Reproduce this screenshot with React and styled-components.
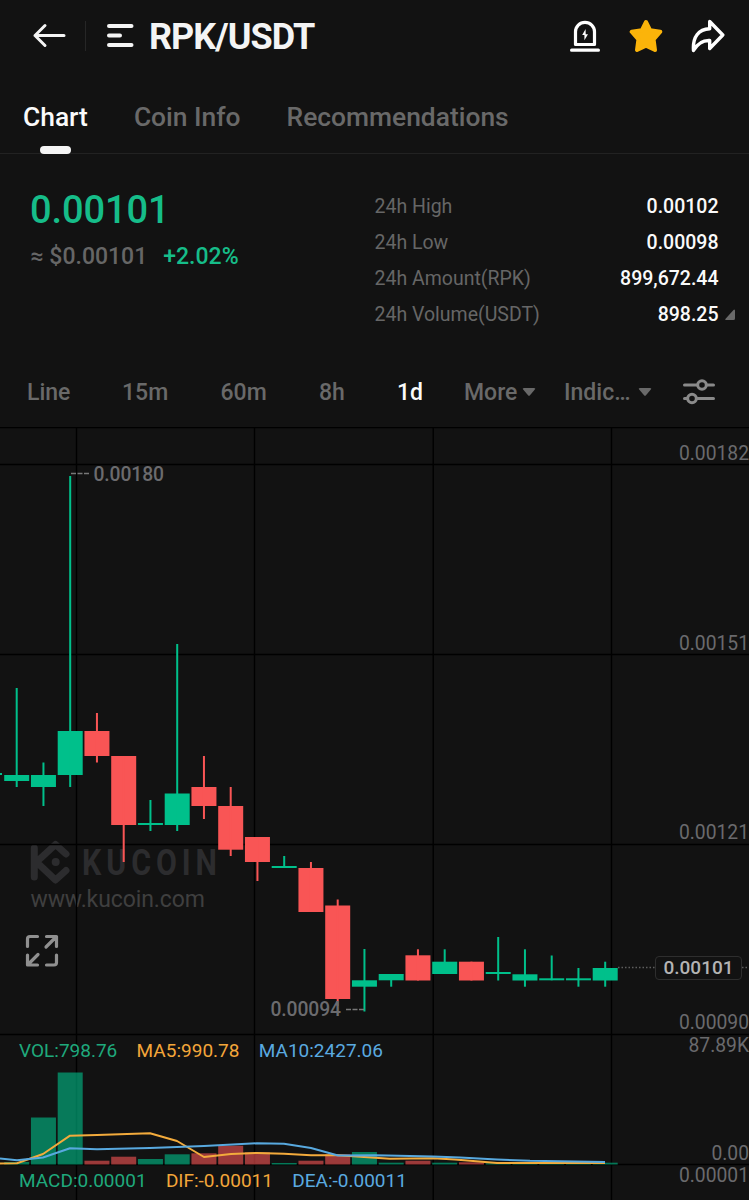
import React from 'react';
import styled, { createGlobalStyle } from 'styled-components';

const GlobalStyle = createGlobalStyle`
    * {
        box-sizing: border-box;
    }
    body {
        margin: 0;
        background: #121212;
        font-family: Roboto, 'Liberation Sans', sans-serif;
    }
`;

const GREEN = '#00c08b';
const RED = '#f95555';

const Page = styled.div`
    width: 749px;
    height: 1200px;
    overflow: hidden;
    display: flex;
    flex-direction: column;
    background: #121212;
    color: #f4f4f4;
    white-space: nowrap;
`;

const Header = styled.header`
    height: 72px;
    flex: none;
    display: flex;
    align-items: center;
    padding: 0 24px 0 32px;

    & svg {
        flex: none;
    }
`;

const Divider = styled.div`
    width: 1px;
    height: 30px;
    margin: 0 20px 0 19px;
    background: #262626;
`;

const Pair = styled.h1`
    flex: 1;
    margin: 2px 0 0 15px;
    font-size: 36px;
    line-height: 42px;
    font-weight: 700;
    letter-spacing: -0.95px;
`;

const HeaderActions = styled.div`
    display: flex;
    align-items: center;
    gap: 28px;

    & svg:first-child {
        margin-right: 1px;
    }
`;

const Tabs = styled.nav`
    height: 82px;
    flex: none;
    display: flex;
    gap: 46px;
    padding-left: 23px;
    border-bottom: 1px solid #222;
`;

const Tab = styled.div`
    display: flex;
    flex-direction: column;
    align-items: center;
    justify-content: space-between;
    padding-top: 30px;
    font-size: 26.4px;
    line-height: 30px;
    font-weight: 500;
    color: ${(p) => (p.$active ? '#fafafa' : '#696969')};

    &::after {
        content: '';
        width: 31px;
        height: 8px;
        margin-bottom: -1px;
        border-radius: 4px;
        background: ${(p) => (p.$active ? '#f4f4f4' : 'transparent')};
    }
`;

const Summary = styled.section`
    height: 203px;
    flex: none;
    display: flex;
    justify-content: space-between;
    padding: 34px 14.5px 0 30px;
`;

const Price = styled.div`
    font-size: 38px;
    line-height: 44px;
    font-weight: 500;
    letter-spacing: -0.1px;
    color: #16bd89;
`;

const Change = styled.div`
    display: flex;
    gap: 16px;
    margin: 11px 0 0 0.5px;
    font-size: 23px;
    line-height: 28px;
    font-weight: 500;
    color: #666;

    & strong {
        font-weight: 500;
        color: #16bd89;
    }
`;

const Stats = styled.div`
    width: 360px;
`;

const StatRow = styled.div`
    display: flex;
    align-items: center;
    height: 36px;
    font-size: 19.5px;
    color: #666;

    & strong {
        margin-left: auto;
        font-weight: 500;
        color: #fafafa;
    }
    & svg {
        margin-left: 6px;
    }
`;

const Intervals = styled.nav`
    height: 70px;
    flex: none;
    display: flex;
    align-items: center;
    padding-left: 27px;
    font-size: 23px;
    font-weight: 500;
    color: #696969;
`;

const Interval = styled.div`
    width: ${(p) => p.$width}px;
    flex: none;
    display: flex;
    align-items: center;
    gap: ${(p) => p.$gap || 5}px;
    color: ${(p) => (p.$active ? '#fafafa' : 'inherit')};
`;

const ChartPanel = styled.section`
    flex: 1;
    position: relative;
    overflow: hidden;

    & > svg {
        display: block;
        position: relative;
    }
`;

const Watermark = styled.div`
    position: absolute;
    left: 30px;
    top: 412px;
    color: #2c2c2e;
`;

const WatermarkLogo = styled.div`
    display: flex;
    align-items: center;
    gap: 12px;
    height: 46px;
    font-size: 37px;
    font-weight: 700;

    & span {
        letter-spacing: 6px;
        transform: scaleX(0.82);
        transform-origin: left;
    }
`;

const WatermarkUrl = styled.div`
    font-size: 23px;
    line-height: 28px;
    letter-spacing: -0.1px;
    margin: 1px 0 0 0.5px;
    color: #3f3f3f;
`;

const Legend = styled.div`
    position: absolute;
    left: 19px;
    top: ${(p) => p.$top}px;
    display: flex;
    gap: 19.3px;
    font-size: 19px;
    line-height: 24px;
`;

const LegendItem = styled.span`
    color: ${(p) => p.$color};
`;

const Expand = styled.div`
    position: absolute;
    left: 25px;
    top: 507px;
    line-height: 0;
`;

const PriceTag = styled.div`
    position: absolute;
    left: 655px;
    top: 529px;
    width: 87px;
    height: 24px;
    display: flex;
    align-items: center;
    justify-content: center;
    padding-bottom: 2px;
    border: 1px solid #2e2e2e;
    border-radius: 4px;
    background: #121212;
    font-size: 19px;
    font-weight: 500;
    color: #b4b4b4;
`;

const tabs = ['Chart', 'Coin Info', 'Recommendations'];

const stats = [
    ['24h High', '0.00102'],
    ['24h Low', '0.00098'],
    ['24h Amount(RPK)', '899,672.44'],
    ['24h Volume(USDT)', '898.25'],
];

// [up, high, top, bottom, low, volume top] in chart coordinates
const candles = [
    [1, 688, 775, 781, 787, 1162],
    [1, 762.5, 775, 787, 806, 1117.5],
    [1, 476, 731, 775, 787, 1072.5],
    [0, 713, 731, 756, 762.5, 1160.7],
    [0, 756, 756, 825, 862, 1156.7],
    [1, 800, 823, 825, 831, 1159],
    [1, 644, 793.5, 825, 831, 1154.3],
    [0, 756, 787, 806, 819, 1153.3],
    [0, 787, 806, 849.7, 856, 1145.7],
    [0, 837, 837, 862, 881, 1152.3],
    [1, 856, 866, 868, 868, 1163],
    [0, 862, 868, 912, 912, 1160.7],
    [0, 899.5, 905.5, 999, 1006, 1154.3],
    [1, 949, 980.3, 986.7, 1011.5, 1152],
    [1, 974, 974, 980.3, 986.7, 1162.7],
    [0, 949.3, 955.3, 980.5, 980.5, 1160.7],
    [1, 949.3, 961.7, 974, 974, 1162.7],
    [0, 961.7, 961.7, 980.5, 980.5, 1162.3],
    [1, 937, 972, 974, 980.5, 1163.3],
    [1, 949.3, 974.3, 980.5, 986.7, 1163.3],
    [1, 955.5, 978.3, 980.3, 980.3, 1163.3],
    [1, 968, 978.3, 980.3, 986.7, 1163.3],
    [1, 961.7, 968, 980.5, 986.7, 1162.7],
];

const ma5 =
    '0,1163.5 17,1163.3 43,1154 70,1135.7 97,1135 150,1133.2 177,1141 204,1157 231,1154 257,1153 284,1153.7 311,1155.2 338,1155.3 364,1157 390,1158.7 433,1158.2 455,1159.5 497,1163 605,1163';
const ma10 =
    '0,1158.5 17,1160.2 43,1157.5 70,1148.2 97,1149.3 150,1148 204,1146 257,1143.3 284,1143.7 311,1148 338,1155.5 375,1155.3 433,1156.5 460,1157.5 497,1159.5 530,1160.8 605,1162';

const axisLabels = [
    [453, '0.00182'],
    [643, '0.00151'],
    [832, '0.00121'],
    [1022, '0.00090'],
    [1045, '87.89K'],
    [1153, '0.00'],
    [1175, '0.00001'],
];

const Caret = () => (
    <svg width="14" height="10" viewBox="0 0 14 10" fill="#696969">
        <path d="M2 1h10q2 0 .8 1.6L8 8.200q-1 1-2 0L1.200 2.600Q0 1 2 1Z" />
    </svg>
);

function HeaderBar() {
    return (
        <Header>
            <svg width="34" height="30" fill="none" stroke="#f4f4f4" strokeWidth="3" strokeLinecap="round" strokeLinejoin="round">
                <path d="M13 4.500 3 14.500 13 24.500M3 14.500h29" />
            </svg>
            <Divider />
            <svg width="28" height="30" stroke="#f4f4f4" strokeWidth="4" strokeLinecap="round">
                <path d="M3 5h22.500M3 14.500h11M3 24h22.500" />
            </svg>
            <Pair>RPK/USDT</Pair>
            <HeaderActions>
                <svg width="30" height="34" viewBox="0 0 30 34" fill="none" stroke="#fff" strokeWidth="3.200" strokeLinejoin="round" strokeLinecap="round">
                    <path d="M5.500 25.500V12.800a9.500 9.500 0 0 1 19 0v12.700ZM1.600 31.200h26.800" />
                    <path d="M15.600 10 12.200 16h2.200v5.200l3.600-6h-2.300Z" fill="#fff" stroke="none" />
                </svg>
                <svg width="34" height="34" viewBox="0 0 34 34" fill="#fbb40a" stroke="#fbb40a" strokeWidth="4" strokeLinejoin="round">
                    <path d="M17 3 21.200 11.300 31.300 12.800 24.600 20.400 26 31 17 26.700 8 31 9.400 20.400 2.700 12.800 12.800 11.300Z" />
                </svg>
                <svg width="34" height="34" viewBox="0 0 34 34" fill="none" stroke="#fff" strokeWidth="3.400" strokeLinejoin="round" strokeLinecap="round">
                    <path d="M18.700 2.500 31.800 16 18.700 29.500V21.500C12 21.200 6.500 24.500 2.500 31.500 1.500 18 7.500 10.300 18.700 9.800Z" />
                </svg>
            </HeaderActions>
        </Header>
    );
}

function Chart() {
    return (
        <svg width="749" height="773" viewBox="0 427 749 773">
            <g stroke="#000" strokeWidth="1.400">
                {[427.5, 464.5, 654.5, 844.5, 1034.5, 1164.5].map((y) => (
                    <line key={y} x1="0" x2="749" y1={y} y2={y} />
                ))}
                {[76.5, 254.5, 433.2, 611.5].map((x) => (
                    <line key={x} x1={x} x2={x} y1="427" y2="1200" />
                ))}
            </g>
            <rect x="0" y="773" width="2" height="2" fill={GREEN} />
            {candles.map(([up, high, top, bottom, low, vol], i) => {
                const x = 16.7 + i * 26.75;
                return (
                    <g key={i} fill={up ? GREEN : RED}>
                        <rect x={x - 12.5} y={top} width="25" height={bottom - top} />
                        <rect x={x - 1} y={high} width="2" height={low - high} />
                        <rect x={x - 12.5} y={vol} width="25" height={1164.5 - vol} opacity="0.6" />
                    </g>
                );
            })}
            <g fill="none" strokeWidth="2" strokeLinejoin="round">
                <polyline points={ma5} stroke="#f3ab3c" />
                <polyline points={ma10} stroke="#58a9df" />
            </g>
            <g stroke="#777" strokeWidth="1.500">
                <path d="M71 473.500h18M346 1009.500h18" strokeDasharray="5 1.500" />
                <path d="M618 967.500h38M742 967.500h7" strokeDasharray="1.500 2" stroke="#5e5e5e" />
            </g>
            <g fontSize="19.300" fontWeight="500" fill="#6b6b6e">
                <text x="93.500" y="480.500" textLength="70.500">
                    0.00180
                </text>
                <text x="270.500" y="1015.500" textLength="70.500">
                    0.00094
                </text>
            </g>
            <g fontSize="19.300" fill="#6a6a6d" textAnchor="end">
                {axisLabels.map(([y, text]) => (
                    <text key={text} x="749" y={y + 6.500}>
                        {text}
                    </text>
                ))}
            </g>
        </svg>
    );
}

function App() {
    return (
        <Page>
            <GlobalStyle />
            <HeaderBar />
            <Tabs>
                {tabs.map((tab, i) => (
                    <Tab key={tab} $active={i === 0}>
                        {tab}
                    </Tab>
                ))}
            </Tabs>
            <Summary>
                <div>
                    <Price>0.00101</Price>
                    <Change>
                        <span>≈ $0.00101</span>
                        <strong>+2.02%</strong>
                    </Change>
                </div>
                <Stats>
                    {stats.map(([label, value]) => (
                        <StatRow key={label}>
                            {label}
                            <strong>{value}</strong>
                            <svg width="10" height="11" fill="#696969">
                                {value === '898.25' && <path d="M10 1.500v8q0 1.500-1.500 1.500H1q-1.500 0-.4-1.200L8.500 1Q9.500 0 10 1.500Z" />}
                            </svg>
                        </StatRow>
                    ))}
                </Stats>
            </Summary>
            <Intervals>
                <Interval $width={95}>Line</Interval>
                <Interval $width={98.5}>15m</Interval>
                <Interval $width={98.5}>60m</Interval>
                <Interval $width={78}>8h</Interval>
                <Interval $width={67} $active>
                    1d
                </Interval>
                <Interval $width={100}>
                    More
                    <Caret />
                </Interval>
                <Interval $width={119} $gap={8}>
                    Indic…
                    <Caret />
                </Interval>
                <svg width="32" height="26" fill="none" stroke="#8a8a8a" strokeWidth="3" strokeLinecap="round">
                    <path d="M1.500 6H14M24 6h6.500M1.500 19.500H4M14 19.500h16.500" />
                    <circle cx="19" cy="6" r="4.300" />
                    <circle cx="9" cy="19.500" r="4.300" />
                </svg>
            </Intervals>
            <ChartPanel>
                <Watermark>
                    <WatermarkLogo>
                        <svg width="40" height="44" fill="none" stroke="#2c2c2e" strokeWidth="7" strokeLinecap="round" strokeLinejoin="round">
                            <path d="M4.300 8v29M36 14 25.500 4.500 6.500 22 25.500 40 36 30.500" />
                            <circle cx="25.700" cy="22" r="4" fill="#2c2c2e" stroke="none" />
                        </svg>
                        <span>KUCOIN</span>
                    </WatermarkLogo>
                    <WatermarkUrl>www.kucoin.com</WatermarkUrl>
                </Watermark>
                <Chart />
                <Legend $top={612}>
                    <LegendItem $color="#1fa97c">VOL:798.76</LegendItem>
                    <LegendItem $color="#f3a63a">MA5:990.78</LegendItem>
                    <LegendItem $color="#5aaae0">MA10:2427.06</LegendItem>
                </Legend>
                <Legend $top={742}>
                    <LegendItem $color="#1fa97c">MACD:0.00001</LegendItem>
                    <LegendItem $color="#f3a63a">DIF:-0.00011</LegendItem>
                    <LegendItem $color="#5aaae0">DEA:-0.00011</LegendItem>
                </Legend>
                <Expand>
                    <svg width="34" height="34" fill="none" stroke="#909090" strokeWidth="3.200" strokeLinecap="round" strokeLinejoin="round">
                        <path d="M12.500 2.500H5q-2.500 0-2.500 2.500V12.500M21.500 2.500h10v10M31 3 21 13M31.500 21v7.500q0 2.500-2.500 2.500h-7.500M12.500 31h-10V21M3 30.500 13 20.500" />
                    </svg>
                </Expand>
                <PriceTag>0.00101</PriceTag>
            </ChartPanel>
        </Page>
    );
}

export default App;
